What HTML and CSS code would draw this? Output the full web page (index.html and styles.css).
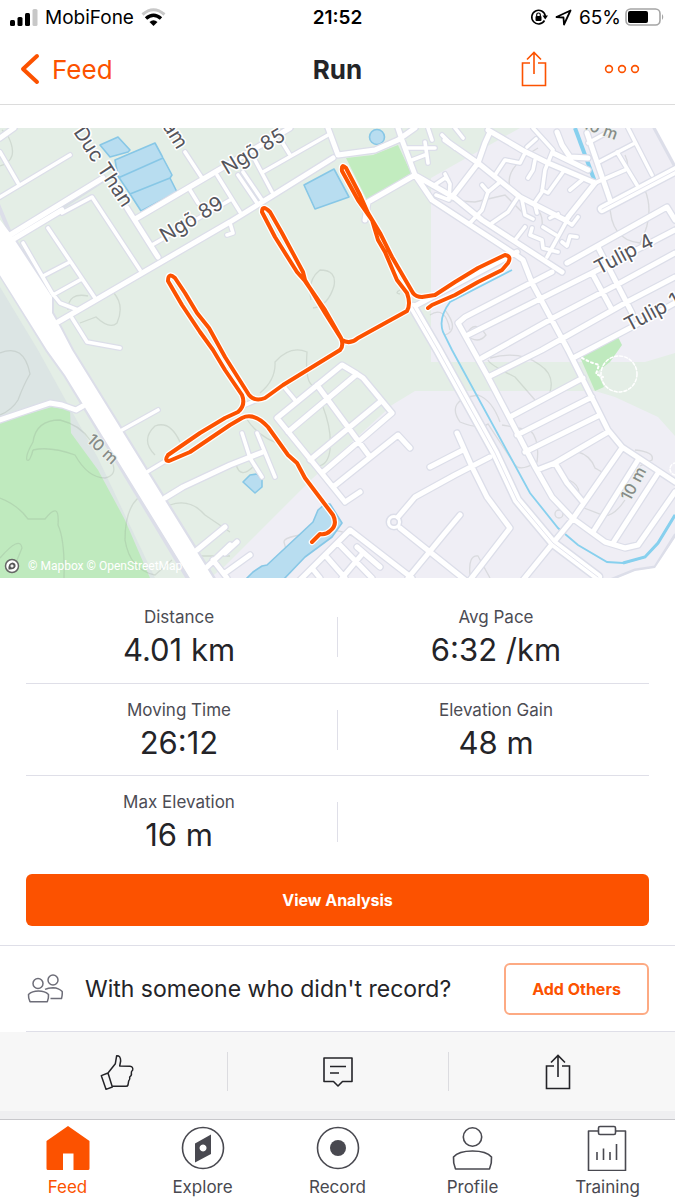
FILE: index.html
```html
<!DOCTYPE html>
<html lang="en">
<head>
  <meta charset="UTF-8">
  <meta name="viewport" content="width=device-width, initial-scale=1.0">
  <title>Run</title>
  <link rel="stylesheet" href="styles.css">
</head>
<body>
  <div class="status-bar">
    <div class="status-left">
      <svg class="icon" width="28" height="18" viewBox="0 0 28 18">
        <rect x="0" y="12" width="5" height="6" rx="1.5"/>
        <rect x="7.5" y="9" width="5" height="9" rx="1.5"/>
        <rect x="15" y="5" width="5" height="13" rx="1.5"/>
        <rect x="22.500" y="1" width="5" height="17" rx="1.5" fill="#c8c8c8"/>
      </svg>
      <span>MobiFone</span>
      <svg class="icon" width="25" height="18" viewBox="0 0 25 18">
        <path d="M1.500 6.500Q12.500 -3 23.500 6.500" fill="none" stroke="#c8c8c8" stroke-width="3"/>
        <path d="M5 10.500Q12.500 4 20 10.500" fill="none" stroke="#000" stroke-width="3.500"/>
        <path d="M8.500 14Q12.500 10.500 16.500 14L12.500 18Z"/>
      </svg>
    </div>
    <div class="clock">21:52</div>
    <div class="status-right">
      <svg class="icon" width="18" height="18" viewBox="0 0 18 18">
        <path d="M14.500 12.500A6.800 6.800 0 1 1 15.300 8" fill="none" stroke="#000" stroke-width="1.600"/>
        <path d="M12.500 7.500h5.500l-2.800 4z"/>
        <rect x="5.500" y="8" width="6" height="5" rx="1"/>
        <path d="M6.700 8V6.800a1.800 1.800 0 0 1 3.600 0V8" fill="none" stroke="#000" stroke-width="1.200"/>
      </svg>
      <svg class="icon" width="17" height="17" viewBox="0 0 17 17">
        <path d="M1.500 8L15.500 1.500L9 15.500L8.500 8.500Z" fill="none" stroke="#000" stroke-width="1.800" stroke-linejoin="round"/>
      </svg>
      <span>65%</span>
      <svg class="icon battery" width="40" height="19" viewBox="0 0 40 19">
        <rect x="1" y="1" width="34" height="16" rx="4.500" fill="none" stroke="#a5a5a5" stroke-width="1.600"/>
        <rect x="3" y="3" width="20" height="12" rx="2"/>
        <path d="M37 6q2.500 3 0 6z" fill="#a5a5a5"/>
      </svg>
    </div>
  </div>

  <header class="header">
    <a href="#" class="back">
      <svg width="20" height="32" viewBox="0 0 20 32"><path d="M17 3L3 16L17 29" fill="none" stroke="currentColor" stroke-width="4" stroke-linecap="round" stroke-linejoin="round"/></svg>
      Feed
    </a>
    <h1 class="title">Run</h1>
    <div class="header-actions">
      <button class="icon-btn" aria-label="Share">
        <svg width="26" height="36" viewBox="0 0 26 36" fill="none" stroke="currentColor" stroke-width="1.600"><path d="M9 12H1.500v22.500h23V12H17M13 23V2M6 8.500l7-7l7 7"/></svg>
      </button>
      <button class="icon-btn" aria-label="More">
        <svg width="36" height="10" viewBox="0 0 36 10" fill="none" stroke="currentColor" stroke-width="1.600"><circle cx="5" cy="5" r="3.400"/><circle cx="18" cy="5" r="3.400"/><circle cx="31" cy="5" r="3.400"/></svg>
      </button>
    </div>
  </header>

  <div class="map">
    <svg class="map-svg" viewBox="0 128 675 450">
      <defs>
        <path id="roads" d="M0 138L14 128M10 235L103 178M12 240L62 210M137 218L290 128M58 322L230 222L333 158M338 155L375 150L398 140L415 128M328 128L338 155M127 208L158 257
          M398 128L402 140L415 175L368 202L365 220M415 175L432 200L513 253L523 260L532 283L568 350L608 430L622 447L675 482M415 175L455 198L482 220L562 272
          M413 307L517 252M445 140L478 163L520 197L565 220M488 130L522 150L548 163L595 183M490 132L485 143L478 163L452 197
          M587 133L610 200M567 263L667 207L675 220M552 272L465 317L458 323L473 350L488 377L508 415L535 467L552 497L572 518L605 542L625 548L638 545L675 492
          M468 335L592 273L675 230M482 358L555 317L620 283L675 253M488 377L542 350L627 302L675 277M575 357L632 327L675 303M598 247L632 313M592 273L612 310
          M510 417L583 378M517 435L592 397M525 452L600 415M537 470L555 463L608 432M555 463L567 483L583 502M622 448L572 520L553 543L523 580M638 460L593 532M658 473L613 543
          M457 433L472 467L487 497L510 528L470 580M345 502L277 418L342 365L357 374L363 378L392 413L322 473M345 502L360 492M288 432L357 374M310 460L380 402M317 385L370 457M333 487L398 435L410 448
          M430 467L463 450M398 517L415 497L455 475L490 457M400 528L465 580M408 578L445 533L460 515
          M300 580L350 530L412 578M338 543L372 578M325 555L345 578M312 568L320 578M357 547L380 567M342 578L363 553
          M0 420L50 403L62 405L76 410L83 406M165 498L183 487L230 465L263 452M207 567L230 545M213 560L227 578M225 573L250 555M197 550L225 527M225 553L237 542
          M588 158L570 157L562 145L557 132M553 153L588 170M568 217L595 183"/>
        <path id="lanes" d="M0 197L70 155M0 152L18 183M62 213L92 197L140 270M48 228L95 298M23 243L52 293L60 303L78 310M45 275L68 263M53 295L80 280M72 318L87 342L120 348
          M185 152L202 178M152 245L230 200M190 190L198 203M217 175L240 212M238 175L257 203M243 172L262 200M255 160L272 192M263 172L328 135M282 142L290 155M227 235L233 233L230 223
          M405 148L435 148M425 142L428 163M412 160L425 155M428 128L432 140M442 135L455 148M455 128L463 138M433 186L445 178L448 180M445 174L450 184L449 200L436 195
          M525 153L520 163L505 160L495 175M535 160L533 170L528 178M533 128L553 150L545 170L542 192L535 202M563 172L548 193L542 190M582 180L570 190M527 147L536 139M570 215L547 257
          M482 185L488 192L500 182M488 192L482 210L470 223M518 197L508 212L492 223M525 227L515 240M522 200L525 215L533 219M532 228L530 235L542 240L543 248L558 252
          M578 217L572 225L565 220M562 242L567 246L570 236L577 237M543 227L556 235M535 205L537 213M550 218L558 214M588 143L608 132M597 163L635 143M595 183L625 170M617 152L637 185M628 128L652 175
          M285 388L295 400M242 433L250 458L262 477M257 433L275 477M122 430L158 410M147 472L167 460M245 405L257 400"/>
        <path id="avenue" d="M413 307L438 350L495 453L517 500L553 543L598 577M602 209L680 168"/>
        <path id="route" d="M428 308L432 305L455 295L478 282L502 270L508 263Q512 256 505 255L478 268L455 282L435 295L422 297Q416 297 413 293L392 257L380 233L368 213L360 195L346 168Q341 163 342 171L358 200L372 220L378 240L385 252L397 280L407 293Q411 304 407 311L387 322L358 338Q350 345 342 340L325 313L305 280L303 272L282 233L270 212Q262 204 262 212L275 237L297 272L305 281L325 310L341 338Q344 346 340 350L283 385L265 398Q255 402 249 395L225 357L209 328L197 313L185 293L175 278Q168 272 168 281L182 305L200 332L213 350L225 370L242 395Q246 405 238 412L225 418L200 433L168 455Q164 461 169 461L190 452L230 425L242 418Q254 412 268 427L288 455L297 463L305 478L333 515Q338 525 330 531Q326 535 320 534L312 542"/>
      </defs>

      <!-- land -->
      <rect y="128" width="675" height="450" fill="#e4eee6"/>
      <path fill="#efeef5" d="M431 178L445 170L520 128H675V353L645 362H431ZM415 391H595L615 397L658 417L675 436V578H210L225 566L313 478L392 405Z"/>
      <path fill="#dce5e4" d="M0 287L38 350L70 408L98 458L125 515L155 578H0Z"/>
      <path fill="#dae0e5" d="M12 235L104 176L106 181L16 240ZM25 247L52 296L49 298L22 250Z"/>
      <path fill="#bfeabe" d="M0 422L52 407L70 410L71 433L98 470L125 520L150 578H0ZM580 357L618 337L622 345L610 362L597 372L604 387L595 391Z"/>
      <path fill="#c2ecbf" d="M346 158L373 155L398 145L411 173L367 200Z"/>

      <!-- contour lines -->
      <g fill="none" stroke="#808a80" stroke-opacity=".2" stroke-width="1.300">
        <path d="M0 166Q20 160 8 136L2 130M68 310Q68 292 88 296M113 292Q125 305 117 323Q110 330 96 317L80 323M0 353Q24 343 30 374Q24 384 18 400Q12 410 0 415"/>
        <path d="M33 450Q30 462 27 460Q25 456 33 442Q36 420 60 420Q80 425 90 440M33 450Q50 446 75 455Q88 478 105 478Q118 475 112 462M0 498Q18 505 28 519H45Q60 500 58 525Q65 540 64 578M0 558Q20 535 22 548L15 565"/>
        <path d="M138 498Q125 510 125 540Q130 570 155 575L172 560M170 505Q190 498 205 515L230 532M200 556H230M155 455Q140 440 155 426Q170 420 180 442"/>
        <path d="M311 300Q307 280 320 270Q337 270 334 286Q328 306 313 308M260 393Q276 380 275 362Q290 345 307 352Q305 380 312 385M323 407Q332 430 330 450Q328 465 318 466M246 418Q260 440 285 445M238 462Q250 452 254 466Q240 480 236 464M332 530Q350 532 358 540M330 532Q283 535 284 542L289 560Q285 572 278 578"/>
        <path d="M538 148Q500 170 512 192Q545 205 542 226M445 200L475 202L505 195L525 215M625 155Q632 170 620 172M610 198Q608 240 640 243Q655 215 645 190M445 310Q460 330 445 335M466 335Q475 318 486 335Q478 345 466 335"/>
        <path d="M488 360Q490 365 515 377L535 400M490 358Q520 350 540 365Q555 375 550 392M500 422Q492 400 478 395Q445 400 460 422Q480 430 488 424L515 465Q520 472 537 462Q540 440 530 430L502 425M578 452Q590 455 595 468L602 472M569 480Q580 485 579 495M584 508L605 516Q615 515 625 500M635 450Q655 452 652 460L640 466M470 575Q468 555 478 556L490 578"/>
        <circle cx="559" cy="514" r="4"/><path d="M430 315Q445 305 450 330M400 290Q394 293 400 294"/>
      </g>

      <!-- water -->
      <g fill="#b8ddf0" stroke="#87c7e6" stroke-width="1.600" stroke-linejoin="round">
        <path d="M100 145L118 137L130 150L128 152L110 157ZM115 160L155 143L162 156L163 158L172 175L170 178L177 192L141 211L130 194L118 176ZM118 178L163 158M130 194L170 178"/>
        <path d="M304 185L334 169L349 197L315 209Z"/><circle cx="377" cy="137" r="7.500"/>
        <path d="M243 482L250 475L257 474L262 480V487L255 493Z"/>
        <path d="M253 572L262 566L267 565L313 522L318 510L325 504H330L342 523L332 537L305 557L283 580H245Z"/>
      </g>
      <g fill="none" stroke="#87d0ee">
        <path d="M575 128L595 182" stroke-width="4"/>
        <path d="M595 183L569 218" stroke-width="2.500"/>
        <path d="M512 270L450 302Q438 318 443 332L452 350L530 493L558 528L578 545L607 562L623 563L645 557L658 543L675 515" stroke-width="1.800"/>
        <path d="M623 563L645 557L658 543L675 515" stroke-width="3"/>
      </g>

      <!-- streets: casing first, white on top -->
      <g fill="none" stroke-linecap="round" stroke-linejoin="round">
        <g stroke="#dcdee9">
          <use href="#roads" stroke-width="7.500"/>
          <use href="#lanes" stroke-width="6"/>
          <use href="#avenue" stroke-width="11"/>
          <circle cx="394" cy="522" r="5.500" stroke-width="6"/>
          <path d="M654 128L675 167M610 580L635 570L655 567L675 535" stroke-width="3"/>
          <path d="M-8 190L10 233L52 297V313L60 327L72 350L216 582H190L65 375L47 350L-8 261Z" stroke-width="4"/>
        </g>
        <g stroke="#fff">
          <use href="#roads" stroke-width="5"/>
          <use href="#lanes" stroke-width="3.600"/>
          <use href="#avenue" stroke-width="8"/>
          <circle cx="394" cy="522" r="5.500" stroke-width="3"/>
        </g>
        <use href="#avenue" stroke="#e3e4ee" stroke-width="1"/>
        <circle cx="619" cy="374" r="18" stroke="#fff" stroke-width="1.500" stroke-dasharray="3 2"/>
        <path d="M582 358L590 362L599 365L596 374L603 377" stroke="#fff" stroke-width="2" stroke-dasharray="2 3"/>
        <circle cx="676" cy="469" r="6" stroke="#fff" stroke-width="1.500" stroke-dasharray="3 2"/>
      </g>
      <path fill="#fff" d="M-2 217L10 233L52 297V313L60 327L72 350L213 578H190L65 375L47 350L-2 272ZM656 128L675 163V128ZM618 578L635 571L655 568L675 538V578Z"/>

      <g class="map-label">
        <text transform="translate(73 132) rotate(57)">Duc Than</text>
        <text transform="translate(162 126) rotate(58)">ấm</text>
        <text transform="translate(227 175) rotate(-31)">Ngõ 85</text>
        <text transform="translate(165 243) rotate(-31)">Ngõ 89</text>
        <text transform="translate(599 275) rotate(-28)">Tulip 4</text>
        <text transform="translate(629 332) rotate(-28)">Tulip 1</text>
      </g>
      <g class="map-label contour-label">
        <text transform="translate(86 441) rotate(43)">10 m</text>
        <text transform="translate(630 502) rotate(-62)">10 m</text>
        <text transform="translate(582 128) rotate(20)">10 m</text>
      </g>

      <g fill="none" stroke-linecap="round" stroke-linejoin="round">
        <use href="#route" stroke="#fff" stroke-width="6.500"/>
        <use href="#route" stroke="#fc5200" stroke-width="4"/>
      </g>
    </svg>
    <div class="attribution">
      <svg width="16" height="16" viewBox="0 0 16 16"><circle cx="8" cy="8" r="6.500" fill="#fff" stroke="#666" stroke-width="1.500"/><path d="M4.500 11.500Q4 5 8.500 4.500Q12 5 11.500 8.500Q10.500 12 4.500 11.500Z" fill="#555"/><path d="M8 5.800l.8 1.500 1.500.7-1.500.7-.8 1.500-.7-1.500-1.500-.7 1.500-.7z" fill="#fff"/></svg>
      <span>© Mapbox © OpenStreetMap</span>
    </div>
  </div>

  <main class="stats">
    <div class="stat-row">
      <div class="stat"><div class="stat-label">Distance</div><div class="stat-value">4.01 km</div></div>
      <div class="divider"></div>
      <div class="stat"><div class="stat-label">Avg Pace</div><div class="stat-value">6:32 /km</div></div>
    </div>
    <div class="stat-row">
      <div class="stat"><div class="stat-label">Moving Time</div><div class="stat-value">26:12</div></div>
      <div class="divider"></div>
      <div class="stat"><div class="stat-label">Elevation Gain</div><div class="stat-value">48 m</div></div>
    </div>
    <div class="stat-row">
      <div class="stat"><div class="stat-label">Max Elevation</div><div class="stat-value">16 m</div></div>
      <div class="divider"></div>
    </div>
    <button class="btn btn-primary">View Analysis</button>
  </main>

  <section class="others">
    <div class="others-row">
      <svg width="37" height="30" viewBox="0 0 37 30" fill="none" stroke="#6d6d78" stroke-width="1.500" stroke-linejoin="round">
        <circle cx="12" cy="9.500" r="5"/><circle cx="27" cy="6" r="5"/>
        <path d="M4 27.700Q2.200 24 2.500 20.500Q6 17 12.500 17T22.500 20.500Q22.800 24 21.300 27.700Z"/>
        <path d="M19 15.300Q22 13.700 27 13.700Q33 14 36.200 17.500Q36.500 21 35.500 24.500H24.500"/>
      </svg>
      <p class="others-text">With someone who didn't record?</p>
      <button class="btn btn-outline">Add Others</button>
    </div>
  </section>

  <div class="actions">
    <button class="action" aria-label="Give kudos">
      <svg width="34" height="38" viewBox="0 0 102 114" fill="none" stroke="currentColor" stroke-width="4.500" stroke-linejoin="round"><path d="M4 68L24 60L37 102L18 109ZM24 60L46 32L50 8Q62 7 62 24L59 39L90 40Q100 41 98 51Q93 56 94 61Q96 67 89 72Q91 79 86 84L84 96Q83 100 78 100H37"/></svg>
    </button>
    <button class="action" aria-label="Comments">
      <svg width="30" height="32" viewBox="0 0 30 32" fill="none" stroke="currentColor" stroke-width="1.600" stroke-linejoin="round"><path d="M1 2H29V25.500H19.500L15 30L10.500 25.500H1ZM7 10.500H23M7 17H16"/></svg>
    </button>
    <button class="action" aria-label="Share">
      <svg width="26" height="36" viewBox="0 0 26 36" fill="none" stroke="currentColor" stroke-width="1.600"><path d="M9 12H1.500v22.500h23V12H17M13 23V2M6 8.500l7-7l7 7"/></svg>
    </button>
  </div>

  <nav class="tabs">
    <a href="#" class="tab active">
      <svg width="44" height="46" viewBox="0 0 44 46" fill="currentColor"><path d="M22 1L43.500 16V43.500Q43.500 45 42 45H27.500V28.500H17V45H2Q.500 45 .500 43.500V16Z"/></svg>
      Feed
    </a>
    <a href="#" class="tab">
      <svg width="44" height="46" viewBox="0 0 44 46"><circle cx="22" cy="23" r="20.500" fill="none" stroke="currentColor" stroke-width="1.600"/><path fill="currentColor" fill-rule="evenodd" d="M30 9.500V29L14 37.500V18.500ZM22 19.500a3.500 3.500 0 1 0 .1 0Z"/></svg>
      Explore
    </a>
    <a href="#" class="tab">
      <svg width="44" height="46" viewBox="0 0 44 46"><circle cx="22" cy="23" r="20.500" fill="none" stroke="currentColor" stroke-width="1.600"/><circle cx="22" cy="23" r="8" fill="currentColor"/></svg>
      Record
    </a>
    <a href="#" class="tab">
      <svg width="44" height="46" viewBox="0 0 44 46" fill="none" stroke="currentColor" stroke-width="1.600" stroke-linejoin="round"><circle cx="21.500" cy="12" r="9.200"/><path d="M4.500 44Q2 38 2.500 32Q7.500 26 21.500 26T40.500 32Q41 38 38.500 44Z"/></svg>
      Profile
    </a>
    <a href="#" class="tab">
      <svg width="44" height="46" viewBox="0 0 44 46" fill="none" stroke="currentColor" stroke-width="1.600" stroke-linejoin="round"><path d="M12 6H2.500V45.500H39.500V6H30M11 35V27M17.500 35V23.500M24 35V27M30.500 35V19"/><rect x="12.500" y="1.500" width="17" height="8" rx="1.500"/></svg>
      Training
    </a>
  </nav>
</body>
</html>
```
FILE: styles.css
```css
:root {
  --orange: #fc5200;
  --text: #242428;
  --text-muted: #4c4c54;
  --line: #dfdfe8;
}

* {
  box-sizing: border-box;
  margin: 0;
  padding: 0;
}

body {
  font-family: Inter, "Noto Sans", sans-serif;
  color: var(--text);
  background-color: #fff;
}

svg {
  display: block;
  flex: none;
}

button {
  font-family: inherit;
  background: none;
  border: none;
  cursor: pointer;
}

a {
  color: inherit;
  text-decoration: none;
}

/* status bar */
.status-bar {
  display: grid;
  grid-template-columns: 1fr auto 1fr;
  align-items: center;
  height: 34px;
  padding: 0 10px;
  font-size: 19px;
  color: #000;
}

.status-left,
.status-right {
  display: flex;
  align-items: center;
  gap: 7px;
}

.status-right {
  justify-content: flex-end;
}

.battery {
  margin-left: -3px;
}

.clock {
  font-weight: 600;
}

/* header */
.header {
  display: grid;
  grid-template-columns: 1fr auto 1fr;
  align-items: center;
  height: 71px;
  padding: 0 20px;
  border-bottom: 1px solid #dcdcdc;
}

.back {
  display: flex;
  align-items: center;
  gap: 12px;
  font-size: 26px;
  color: var(--orange);
}

.title {
  font-size: 26px;
  font-weight: 700;
}

.header-actions {
  display: flex;
  align-items: center;
  justify-content: flex-end;
  gap: 57px;
  padding-right: 15px;
}

.icon-btn {
  color: var(--orange);
}

/* map */
.map {
  position: relative;
  margin-top: 23px;
}

.map-svg {
  width: 100%;
  height: auto;
}

.map-label {
  font-size: 20px;
  fill: #55555c;
  stroke: #fff;
  stroke-width: 3px;
  stroke-linejoin: round;
  paint-order: stroke;
}

.contour-label {
  font-size: 16px;
  font-weight: 500;
  fill: #868c88;
  stroke: #eef2ef;
  stroke-width: 2px;
}

.attribution {
  position: absolute;
  left: 4px;
  bottom: 4px;
  display: flex;
  align-items: center;
  gap: 8px;
  font-family: Roboto, sans-serif;
  font-size: 12px;
  color: #fff;
}

/* stats */
.stats {
  padding: 13px 26px 19px;
}

.stat-row {
  display: grid;
  grid-template-columns: 1fr 1px 1fr;
  column-gap: 5px;
  height: 92px;
  padding-top: 15px;
  text-align: center;
}

.stat-row + .stat-row {
  border-top: 1px solid var(--line);
}

.stat-label {
  font-size: 17px;
  line-height: 22px;
  color: var(--text-muted);
}

.stat-value {
  font-size: 31px;
  line-height: 44px;
}

.divider {
  height: 40px;
  margin-top: 11px;
  background-color: var(--line);
}

.btn {
  height: 52px;
  border-radius: 6px;
  font-size: 16px;
  font-weight: 700;
}

.btn-primary {
  width: 100%;
  margin-top: 7px;
  background-color: var(--orange);
  color: #fff;
}

.btn-outline {
  width: 145px;
  border: 2px solid #fdaa83;
  color: var(--orange);
}

/* add others */
.others {
  padding-left: 26px;
  border-top: 1px solid var(--line);
}

.others-row {
  display: flex;
  align-items: center;
  height: 86px;
  padding-right: 26px;
  border-bottom: 1px solid var(--line);
}

.others-text {
  flex: 1;
  margin-left: 22px;
  font-size: 23px;
}

/* action bar */
.actions {
  display: grid;
  grid-template-columns: repeat(3, 1fr);
  height: 79px;
  padding: 20px 7px;
  background-color: #f7f7f7;
}

.action {
  display: flex;
  align-items: center;
  justify-content: center;
  color: var(--text);
}

.action + .action {
  border-left: 1px solid #dcdce0;
}

/* tab bar */
.tabs {
  display: grid;
  grid-template-columns: repeat(5, 1fr);
  margin-top: 8px;
  padding: 5px 0 7px;
  border-top: 1px solid #c8c8cc;
  background-color: #fff;
  box-shadow: 0 -8px 0 #efeff1;
}

.tab {
  display: flex;
  flex-direction: column;
  align-items: center;
  gap: 5px;
  font-size: 17px;
  line-height: 22px;
  color: #494950;
}

.tab.active {
  color: var(--orange);
}
```
